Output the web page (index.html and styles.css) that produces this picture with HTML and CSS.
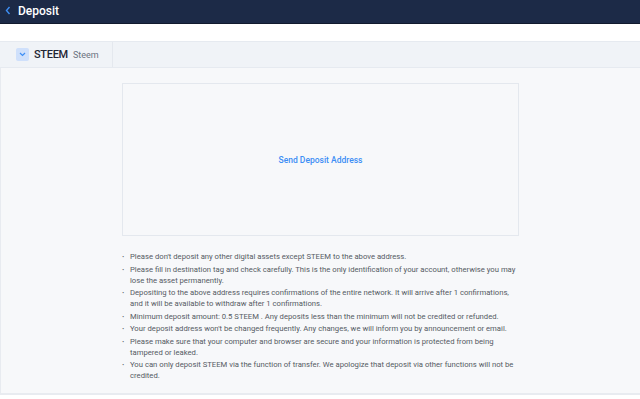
FILE: index.html
```html
<!DOCTYPE html>
<html lang="en">
<head>
  <meta charset="UTF-8" />
  <title>Deposit</title>
  <link rel="stylesheet" href="styles.css">
</head>
<body>
  <div class="topbar">
    <span class="back">
      <svg width="6" height="9" viewBox="0 0 6 9"><path d="M4.5 1 L1.5 4.5 L4.5 8" fill="none" stroke="#3d8ef5" stroke-width="1.4"/></svg>
    </span>
    <span class="title">Deposit</span>
  </div>

  <div class="spacer"></div>

  <div class="tabs">
    <div class="tab">
      <span class="drop">
        <svg width="7" height="5" viewBox="0 0 7 5"><path d="M1 1 L3.5 3.5 L6 1" fill="none" stroke="#3d8ef5" stroke-width="1.2"/></svg>
      </span>
      <span class="coin">STEEM</span>
      <span class="coin-name">Steem</span>
    </div>
  </div>

  <div class="content">
    <div class="address-box">
      <a class="send-link">Send Deposit Address</a>
    </div>

    <ul class="notes">
      <li>Please don't deposit any other digital assets except STEEM to the above address.</li>
      <li>Please fill in destination tag and check carefully. This is the only identification of your account, otherwise you may lose the asset permanently.</li>
      <li>Depositing to the above address requires confirmations of the entire network. It will arrive after 1 confirmations, and it will be available to withdraw after 1 confirmations.</li>
      <li>Minimum deposit amount: 0.5 STEEM . Any deposits less than the minimum will not be credited or refunded.</li>
      <li>Your deposit address won't be changed frequently. Any changes, we will inform you by announcement or email.</li>
      <li>Please make sure that your computer and browser are secure and your information is protected from being tampered or leaked.</li>
      <li>You can only deposit STEEM via the function of transfer. We apologize that deposit via other functions will not be credited.</li>
    </ul>
  </div>
</body>
</html>
```

FILE: styles.css
```css
body {
  margin: 0;
  font-family: Roboto, "Liberation Sans", sans-serif;
  background: #fff;
}

.topbar {
  height: 24px;
  background: #1c2a47;
  border-bottom: 1px solid #111a2e;
  display: flex;
  align-items: center;
  padding-left: 5px;
  padding-bottom: 2px;
  box-sizing: border-box;
}

.back {
  display: flex;
  align-items: center;
  width: 13px;
}

.title {
  color: #fff;
  font-size: 12px;
  font-weight: 500;
}

.spacer {
  height: 17px;
}

.tabs {
  height: 25px;
  background: #f0f3f7;
  border-top: 1px solid #e6eaf0;
  border-bottom: 1px solid #e6eaf0;
  display: flex;
}

.tab {
  width: 113px;
  border-right: 1px solid #e4e8ee;
  display: flex;
  align-items: center;
  padding-left: 16px;
  box-sizing: border-box;
}

.drop {
  width: 13px;
  height: 13px;
  background: #cfe0fb;
  border-radius: 2px;
  display: flex;
  align-items: center;
  justify-content: center;
  margin-right: 5px;
}

.coin {
  font-size: 11px;
  color: #1f2533;
  font-weight: 500;
  margin-right: 5px;
  letter-spacing: -0.3px;
}

.coin-name {
  font-size: 9px;
  color: #6b7280;
}

.content {
  background: #f7f8fa;
  border-left: 1px solid #e8ebf0;
  border-bottom: 2px solid #e8ebf0;
  height: 327px;
  box-sizing: border-box;
  padding-top: 15px;
}

.address-box {
  width: 397px;
  height: 153px;
  margin-left: 121px;
  border: 1px solid #e4e8ee;
  box-sizing: border-box;
  display: flex;
  align-items: center;
  justify-content: center;
}

.send-link {
  color: #3d8ef5;
  font-size: 8.5px;
  font-weight: 500;
}

.notes {
  list-style: none;
  margin: 15px 0 0 121px;
  padding: 0;
  width: 400px;
  font-size: 7.7px;
  line-height: 11px;
  color: #555a63;
}

.notes li {
  position: relative;
  padding-left: 8px;
  margin-bottom: 1.5px;
}

.notes li::before {
  content: "\00b7";
  position: absolute;
  left: 0;
  top: 0;
  font-weight: bold;
}
```
